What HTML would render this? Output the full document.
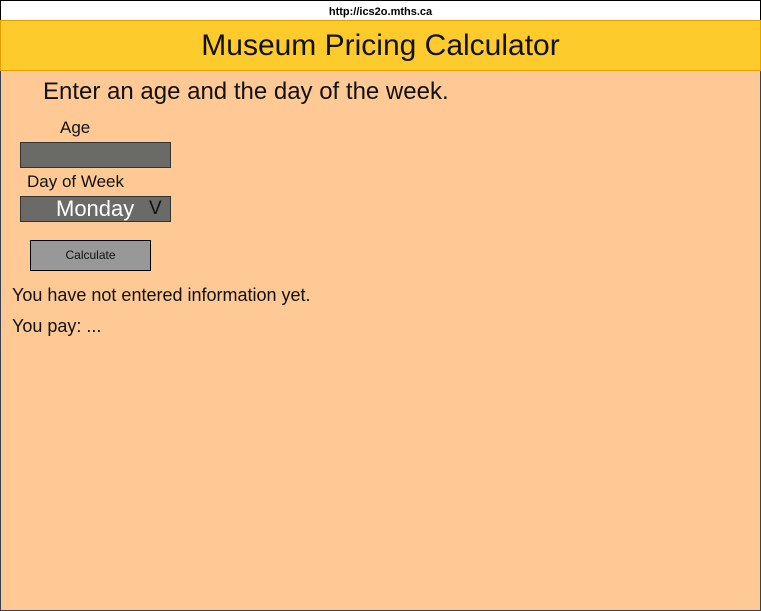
<!DOCTYPE html>
<html><head><style>
body{margin:0;width:761px;height:611px;position:relative;font-family:"Liberation Sans",sans-serif;overflow:hidden;background:#fff}
.a{position:absolute;white-space:nowrap}
</style></head><body>
<div class="a" style="left:0;top:0;width:759px;height:19px;border:1px solid #000;border-bottom:none;background:#fff;font-size:11px;font-weight:bold;text-align:center;line-height:22px">http://ics2o.mths.ca</div>
<div class="a" style="left:0;top:20px;width:759px;height:590px;border:1px solid #3a4050;border-top:none;background:#fec994"></div>
<div class="a" style="left:0;top:20px;width:759px;height:49px;background:#fecb2c;border:1px solid #e0a000;font-size:30px;text-align:center;line-height:50px;color:#111">Museum Pricing Calculator</div>
<div class="a" style="left:43px;top:78px;font-size:24px;color:#111">Enter an age and the day of the week.</div>
<div class="a" style="left:60px;top:118px;font-size:17px;color:#111">Age</div>
<div class="a" style="left:20px;top:142px;width:149px;height:24px;background:#6a6b67;border:1px solid #333"></div>
<div class="a" style="left:27px;top:172px;font-size:17px;color:#111">Day of Week</div>
<div class="a" style="left:20px;top:196px;width:149px;height:24px;background:#6a6b67;border:1px solid #333"></div>
<div class="a" style="left:56px;top:196px;font-size:22px;color:#fff">Monday</div>
<div class="a" style="left:149px;top:198px;font-size:19px;color:#111">V</div>
<div class="a" style="left:30px;top:240px;width:119px;height:29px;background:#989898;border:1px solid #000;font-size:12px;text-align:center;line-height:29px;color:#111">Calculate</div>
<div class="a" style="left:12px;top:285px;font-size:18px;color:#111">You have not entered information yet.</div>
<div class="a" style="left:12px;top:316px;font-size:18px;color:#111">You pay: ...</div>
</body></html>
